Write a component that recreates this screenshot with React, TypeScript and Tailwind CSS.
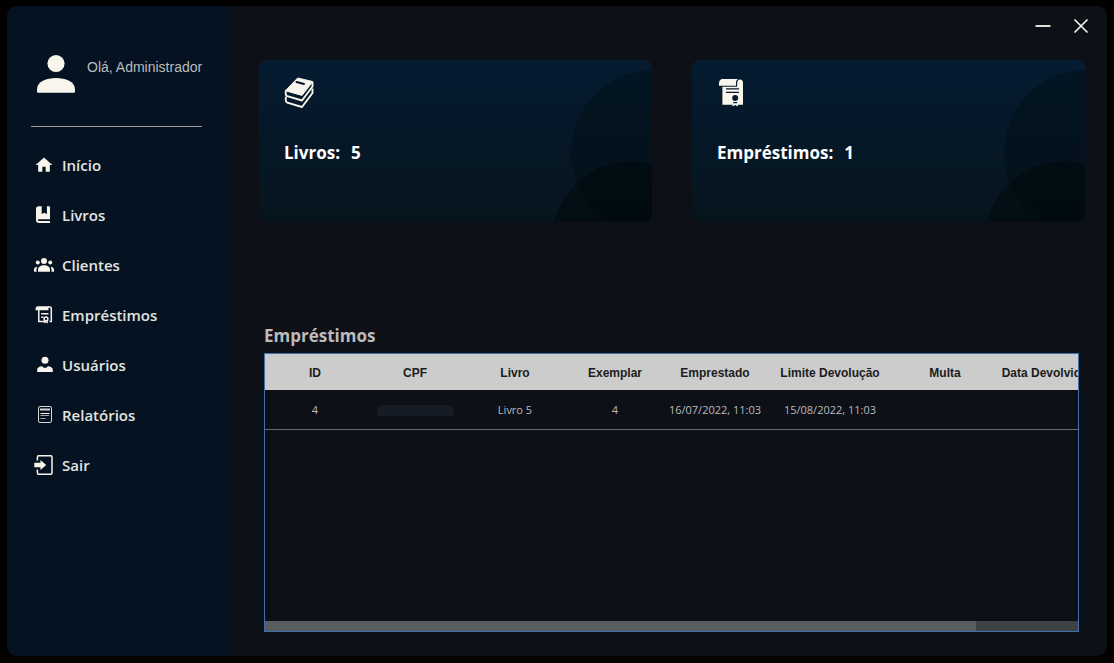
import { useEffect, useRef, useState, type ReactNode } from 'react';
import { MdHome } from 'react-icons/md';

function AvatarIcon() {
  return (
    <svg width="38" height="40" viewBox="0 0 38 40" fill="#f7f5ec" aria-hidden="true">
      <circle cx="19" cy="9.5" r="8.6" />
      <path d="M0 35.500C0 27.500 9.500 24 19 24s19 3.500 19 11.500V37.500q0 1.300-1.300 1.300H1.300Q0 38.800 0 37.500z" />
    </svg>
  );
}

function BookIcon() {
  return (
    <svg width="20" height="20" viewBox="0 0 20 20" fill="#f7f5ec" aria-hidden="true">
      <path d="M5 1.200h2.700V9l2.600-1.300L12.900 9V1.200h1.800q1.300 0 1.300 1.300V14.200H5.300q-1.700 0-1.700.8 0 .9 1.700.9H16v2H5.300Q2 17.900 2 15V4q0-2.800 3-2.800z" />
    </svg>
  );
}

function GroupIcon() {
  return (
    <svg width="20" height="20" viewBox="0 0 20 20" fill="#f7f5ec" aria-hidden="true">
      <circle cx="10" cy="6" r="3" />
      <circle cx="3.800" cy="7.600" r="2" />
      <circle cx="16.200" cy="7.600" r="2" />
      <path d="M4 16.800v-2c0-3 2.500-4.500 6-4.500s6 1.500 6 4.500v2z" />
      <path d="M2.800 11.800C1 12.200 0 13.300 0 15v1.800h2.500V15c0-1.300.2-2.200.9-3z" />
      <path d="M17.200 11.800c1.800.4 2.800 1.500 2.800 3.200v1.800h-2.500V15c0-1.300-.2-2.200-.9-3z" />
    </svg>
  );
}

function LoanIcon() {
  return (
    <svg width="20" height="20" viewBox="0 0 20 20" fill="none" stroke="#f7f5ec" aria-hidden="true">
      <path d="M1.500 5.200C1.500 2.300 2.200 1.300 4.200 1.300H14.500V5.200z" fill="#f7f5ec" stroke="none" />
      <path d="M14 2h1.800q1.500 0 1.500 1.500V16.500H15.500M4.800 5v11.500H10" strokeWidth="1.500" />
      <path d="M7.200 8.800h7.300M7.200 12.200h2.200" strokeWidth="1.500" />
      <circle cx="12" cy="14" r="1.900" strokeWidth="1.500" />
      <path d="M10.200 15.500v3l1.800-1 1.800 1v-3l-1.800 1z" fill="#f7f5ec" stroke="none" />
    </svg>
  );
}

function UserIcon() {
  return (
    <svg width="20" height="20" viewBox="0 0 20 20" fill="#f7f5ec" aria-hidden="true">
      <circle cx="11" cy="5.200" r="3.500" />
      <path d="M3.200 17v-2.100c0-2.300 2.500-3.600 5-3.600.7 1.100 1.600 1.600 2.800 1.600s2.100-.5 2.800-1.600c2.500 0 5 1.300 5 3.600V17z" />
    </svg>
  );
}

function ReportIcon() {
  return (
    <svg width="20" height="20" viewBox="0 0 20 20" fill="none" stroke="#f7f5ec" aria-hidden="true">
      <rect x="4.500" y="1.500" width="13" height="16" rx="1.500" stroke="#d8d8d2" />
      <path d="M6 4.500h10" strokeWidth="2" stroke="#d3d3ce" />
      <path d="M6.500 8.500h9" />
      <path d="M6.500 10.500H15M6.500 13.500h5" stroke="#a3a6a6" />
    </svg>
  );
}

function ExitIcon() {
  return (
    <svg width="20" height="20" viewBox="0 0 20 20" aria-hidden="true">
      <path d="M3.400 5.500V2.200q0-1.500 1.500-1.500H16.500q1.500 0 1.500 1.500V17.800q0 1.500-1.500 1.500H4.900q-1.500 0-1.500-1.500V14.500" fill="none" stroke="#f7f5ec" strokeWidth="1.500" />
      <path d="M.3 7.800h6.200V4.900L12.200 10l-5.700 5.100v-2.900H.3z" fill="#f7f5ec" />
    </svg>
  );
}

function BooksIcon() {
  return (
    <svg width="30" height="32" viewBox="-1 0 30 32" aria-hidden="true">
      <path d="M12.700 1 27.800 4.600 17 18.400 2 14.200Q.8 13.500 1.500 12.500z" fill="#f7f5ec" stroke="#f7f5ec" strokeLinejoin="round" />
      <path d="m11.500 5 7.500 2" stroke="#06182a" strokeWidth="2" strokeLinecap="round" />
      <g fill="none" stroke="#f7f5ec" strokeWidth="1.900" strokeLinejoin="round">
        <path d="M1 13q-1 5.500 1.200 6.200L17 23.500 27.500 9.500V5" />
        <path d="M1 20q-1 4.800 1.200 5.600L17 30 27.500 16V11.500" />
      </g>
    </svg>
  );
}

function CertificateIcon() {
  return (
    <svg width="30" height="32" viewBox="-1 0 30 32" aria-hidden="true">
      <g fill="#f7f5ec">
        <path d="M1 8.800C.6 4.500 2 2 4.700 2H20q-2 1-2 4v2.800z" />
        <path d="M4.400 9.800H19V6q0-3.600 3-3.600T25 6V27.700H4.400z" />
      </g>
      <path d="M18.700 9V6q0-2.500 1.600-3.500" fill="none" stroke="#06182a" strokeWidth=".8" />
      <path d="M8 11.800h13M8 15.400h13" stroke="#06182a" strokeWidth="1.300" />
      <circle cx="17.200" cy="20.900" r="3" fill="#06182a" />
      <path d="M14.500 24.200v5.300l2.700-1.500 2.700 1.500v-5.300z" fill="#f7f5ec" />
      <path d="M15.300 25.600h3.800" stroke="#06182a" strokeWidth="1.300" />
    </svg>
  );
}

const navItems: { label: string; icon: ReactNode }[] = [
  { label: 'Início', icon: <MdHome size={22} color="#f7f5ec" /> },
  { label: 'Livros', icon: <BookIcon /> },
  { label: 'Clientes', icon: <GroupIcon /> },
  { label: 'Empréstimos', icon: <LoanIcon /> },
  { label: 'Usuários', icon: <UserIcon /> },
  { label: 'Relatórios', icon: <ReportIcon /> },
  { label: 'Sair', icon: <ExitIcon /> },
];

function Sidebar() {
  return (
    <aside className="flex w-56 shrink-0 flex-col bg-[#051221]">
      <div className="flex gap-3 pt-12 pl-[30px]">
        <AvatarIcon />
        <p className="pt-[3px] font-['Liberation_Sans',sans-serif] text-sm leading-5 whitespace-nowrap text-[#bbbbbb]">
          Olá, Administrador
        </p>
      </div>
      <hr className="mx-6 mt-8 w-[171px] border-[#9a9a96]" />
      <nav className="mt-[13px]">
        <ul>
          {navItems.map((item) => (
            <li key={item.label}>
              <a href="#" className="flex h-[50px] items-center gap-2 pl-[27px] text-[15px] font-semibold text-[#e4e4e0]">
                <span className="flex w-5 shrink-0 justify-center">{item.icon}</span>
                {item.label}
              </a>
            </li>
          ))}
        </ul>
      </nav>
    </aside>
  );
}

function StatCard({ icon, label, value }: { icon: ReactNode; label: string; value: number }) {
  return (
    <section className="relative h-[162px] overflow-hidden rounded-lg bg-linear-to-b from-[#051b31] to-[#06141d] px-[25px] pt-[17px]">
      <svg className="absolute top-0 right-0" width="120" height="162" viewBox="0 0 120 162" aria-hidden="true">
        <circle cx="122" cy="93" r="83" fill="#000a0f" fillOpacity=".36" />
        <circle cx="100" cy="181" r="80" fill="#000605" fillOpacity=".38" />
      </svg>
      {icon}
      <p className="mt-8 flex gap-[11px] text-[17px] leading-6 font-bold text-white">
        <span>{label}:</span>
        <span>{value}</span>
      </p>
    </section>
  );
}

const columns = [
  { name: 'ID', width: 'w-[100px]' },
  { name: 'CPF', width: 'w-[100px]' },
  { name: 'Livro', width: 'w-[100px]' },
  { name: 'Exemplar', width: 'w-[100px]' },
  { name: 'Emprestado', width: 'w-[100px]' },
  { name: 'Limite Devolução', width: 'w-[130px]' },
  { name: 'Multa', width: 'w-[100px]' },
  { name: 'Data Devolvido', width: 'w-[100px]' },
  { name: '', width: 'w-[100px]' },
];

const loans = [
  { id: 4, book: 'Livro 5', copy: 4, lent: '16/07/2022, 11:03', due: '15/08/2022, 11:03' },
];

function LoansTable() {
  const viewport = useRef<HTMLDivElement>(null);
  const [bar, setBar] = useState({ left: 0, width: 87.3 });

  const update = () => {
    const el = viewport.current;
    if (!el) return;
    setBar({
      left: (el.scrollLeft / el.scrollWidth) * 100,
      width: (el.clientWidth / el.scrollWidth) * 100,
    });
  };

  useEffect(() => {
    update();
    window.addEventListener('resize', update);
    return () => window.removeEventListener('resize', update);
  }, []);

  return (
    <div className="flex min-h-[279px] flex-1 flex-col border border-[#3f70a8]">
      <div ref={viewport} onScroll={update} className="min-w-0 flex-1 overflow-x-auto [scrollbar-width:none]">
        <table className="w-[930px] min-w-full table-fixed border-separate border-spacing-0 text-center text-[11px]">
          <thead>
            <tr className="h-9 bg-[#cccccc] font-['Liberation_Sans',sans-serif] text-xs text-[#1c1c1c]">
              {columns.map((c) => (
                <th key={c.name} className={`${c.width} p-0 pt-0.5 font-bold whitespace-nowrap`}>
                  {c.name}
                </th>
              ))}
            </tr>
          </thead>
          <tbody>
            {loans.map((loan) => (
              <tr key={loan.id} className="h-10 text-[#bbbbbb] *:border-b *:border-[#67696c] *:p-0 *:pt-0.5">
                <td>{loan.id}</td>
                <td>
                  <span className="mx-auto block h-[11px] w-[77px] rounded-t-md bg-[#151c26]" />
                </td>
                <td>{loan.book}</td>
                <td>{loan.copy}</td>
                <td className="whitespace-nowrap">{loan.lent}</td>
                <td className="whitespace-nowrap">{loan.due}</td>
                <td />
                <td />
                <td />
              </tr>
            ))}
          </tbody>
        </table>
      </div>
      <div className="h-2.5 bg-[#3f4244]">
        <div className="h-full bg-[#595d60]" style={{ width: `${bar.width}%`, marginLeft: `${bar.left}%` }} />
      </div>
    </div>
  );
}

export default function App() {
  return (
    <div className="flex min-h-screen bg-[#030000] px-[7px] pt-1.5 pb-[7px] font-['Open_Sans',sans-serif]">
      <div className="flex min-w-0 flex-1 overflow-hidden rounded-[10px] bg-[#0d1017]">
        <Sidebar />
        <main className="flex min-w-0 flex-1 flex-col pr-[22px] pb-6 pl-7">
          <div className="-mr-[11px] flex h-10 justify-end gap-2">
            <button type="button" aria-label="Minimizar" className="flex h-10 w-[30px] items-center justify-center">
              <svg width="16" height="16" viewBox="0 0 16 16" stroke="#e0dfd4" strokeWidth="2">
                <path d="M.5 8h15" />
              </svg>
            </button>
            <button type="button" aria-label="Fechar" className="flex h-10 w-[30px] items-center justify-center">
              <svg width="16" height="16" viewBox="0 0 16 16" stroke="#f7f5ec" strokeWidth="1.600">
                <path d="m1.500 1.500 13 13m0-13-13 13" />
              </svg>
            </button>
          </div>
          <div className="mt-3.5 grid grid-cols-2 gap-10">
            <StatCard icon={<BooksIcon />} label="Livros" value={5} />
            <StatCard icon={<CertificateIcon />} label="Empréstimos" value={1} />
          </div>
          <section className="mt-[102px] mr-1.5 ml-[5px] flex flex-1 flex-col">
            <h2 className="mb-[5px] text-[17px] leading-6 font-bold text-[#bbbbbb]">Empréstimos</h2>
            <LoansTable />
          </section>
        </main>
      </div>
    </div>
  );
}
